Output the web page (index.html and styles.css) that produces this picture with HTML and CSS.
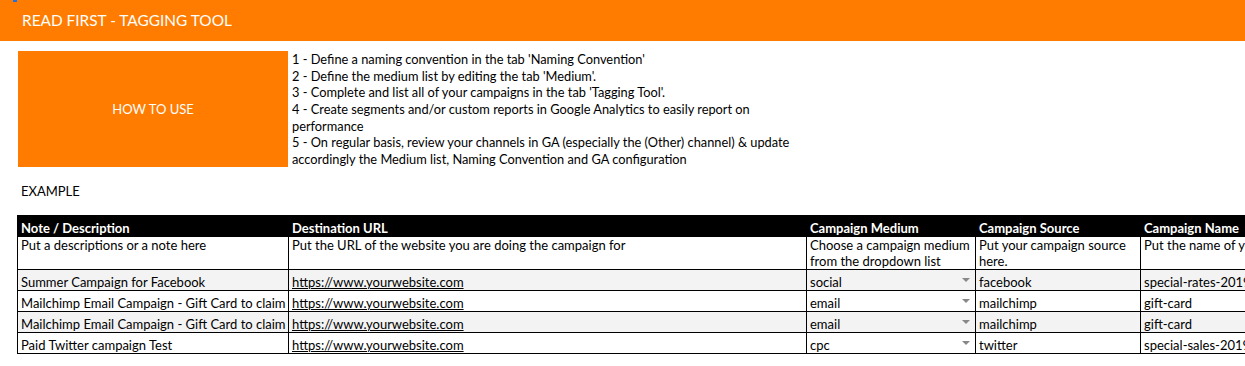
FILE: index.html
```html
<!DOCTYPE html>
<html>
<head>
<meta charset="utf-8">
<link rel="stylesheet" href="styles.css">
</head>
<body>
<div class="page">
  <header class="topbar">
    <span class="sel-mark"></span>
    <span class="title">READ FIRST - TAGGING TOOL</span>
  </header>
  <section class="howto">
    <div class="howto-box">HOW TO USE</div>
    <div class="howto-text">
      1 - Define a naming convention in the tab 'Naming Convention'<br>
      2 - Define the medium list by editing the tab 'Medium'.<br>
      3 - Complete and list all of your campaigns in the tab 'Tagging Tool'.<br>
      4 - Create segments and/or custom reports in Google Analytics to easily report on performance<br>
      5 - On regular basis, review your channels in GA (especially the (Other) channel) &amp; update accordingly the Medium list, Naming Convention and GA configuration
    </div>
  </section>
  <div class="example">EXAMPLE</div>
  <div class="table-wrap">
    <table class="grid">
      <colgroup>
        <col class="c1"><col class="c2"><col class="c3"><col class="c4"><col class="c5">
      </colgroup>
      <thead>
        <tr>
          <th>Note / Description</th>
          <th>Destination URL</th>
          <th>Campaign Medium</th>
          <th>Campaign Source</th>
          <th>Campaign Name</th>
        </tr>
      </thead>
      <tbody>
        <tr class="desc">
          <td>Put a descriptions or a note here</td>
          <td>Put the URL of the website you are doing the campaign for</td>
          <td>Choose a campaign medium from the dropdown list</td>
          <td>Put your campaign source here.</td>
          <td>Put the name of your campaign here.</td>
        </tr>
        <tr class="alt">
          <td>Summer Campaign for Facebook</td>
          <td><span class="link">https://www.yourwebsite.com</span></td>
          <td><div class="dd"><span>social</span><span class="arrow"></span></div></td>
          <td>facebook</td>
          <td>special-rates-2019</td>
        </tr>
        <tr>
          <td>Mailchimp Email Campaign - Gift Card to claim</td>
          <td><span class="link">https://www.yourwebsite.com</span></td>
          <td><div class="dd"><span>email</span><span class="arrow"></span></div></td>
          <td>mailchimp</td>
          <td>gift-card</td>
        </tr>
        <tr class="alt">
          <td>Mailchimp Email Campaign - Gift Card to claim</td>
          <td><span class="link">https://www.yourwebsite.com</span></td>
          <td><div class="dd"><span>email</span><span class="arrow"></span></div></td>
          <td>mailchimp</td>
          <td>gift-card</td>
        </tr>
        <tr>
          <td>Paid Twitter campaign Test</td>
          <td><span class="link">https://www.yourwebsite.com</span></td>
          <td><div class="dd"><span>cpc</span><span class="arrow"></span></div></td>
          <td>twitter</td>
          <td>special-sales-2019</td>
        </tr>
      </tbody>
    </table>
  </div>
</div>
</body>
</html>
```
FILE: styles.css
```css
html, body {
  margin: 0;
  padding: 0;
  background: #fff;
  overflow: hidden;
}
.page {
  font-family: Lato, "Open Sans", sans-serif;
  color: #000;
  width: 1245px;
  height: 366px;
  overflow: hidden;
}
.topbar {
  position: relative;
  height: 41px;
  background: #ff7c00;
  color: #fff;
  display: flex;
  align-items: center;
  padding-left: 22px;
  font-size: 15.4px;
}
.title {
  margin-top: -2px;
}
.sel-mark {
  position: absolute;
  left: 13px;
  top: 0;
  width: 4px;
  height: 2px;
  background: #1a73e8;
}
.howto {
  display: flex;
  align-items: flex-start;
  height: 116px;
  margin-top: 10px;
  padding-left: 18px;
}
.howto-box {
  flex: none;
  width: 270px;
  height: 116px;
  background: #ff7c00;
  color: #fff;
  font-size: 13px;
  display: flex;
  align-items: center;
  justify-content: center;
}
.howto-text {
  width: 512px;
  padding-left: 4px;
  font-size: 12.8px;
  line-height: 16.67px;
}
.example {
  margin-top: 16px;
  padding-left: 21px;
  font-size: 13px;
  line-height: 16px;
}
.table-wrap {
  margin-top: 16px;
  padding-left: 17px;
}
.grid {
  border-collapse: collapse;
  table-layout: fixed;
  width: 1400px;
  font-size: 13px;
}
.c1 { width: 271px; }
.c2 { width: 518px; }
.c3 { width: 169px; }
.c4 { width: 165px; }
.c5 { width: 277px; }
.grid th {
  background: #000;
  color: #fff;
  font-weight: 700;
  text-align: left;
  height: 20px;
  padding: 0 3px;
  vertical-align: bottom;
  line-height: 16px;
  border: 1px solid #000;
  white-space: nowrap;
}
.grid td {
  border: 1px solid #000;
  height: 20px;
  padding: 0 3px;
  line-height: 16px;
  vertical-align: bottom;
  white-space: nowrap;
  overflow: hidden;
}
.grid tr.desc td {
  height: 32px;
  vertical-align: top;
  white-space: normal;
  padding-top: 0;
}
.grid tr.alt td {
  background: #f3f3f3;
}
.link {
  text-decoration: underline;
}
.dd {
  display: flex;
  align-items: center;
  justify-content: space-between;
}
.arrow {
  width: 0;
  height: 0;
  border-left: 4px solid transparent;
  border-right: 4px solid transparent;
  border-top: 4px solid #888;
  margin-right: 2px;
  margin-bottom: 4px;
}
```
